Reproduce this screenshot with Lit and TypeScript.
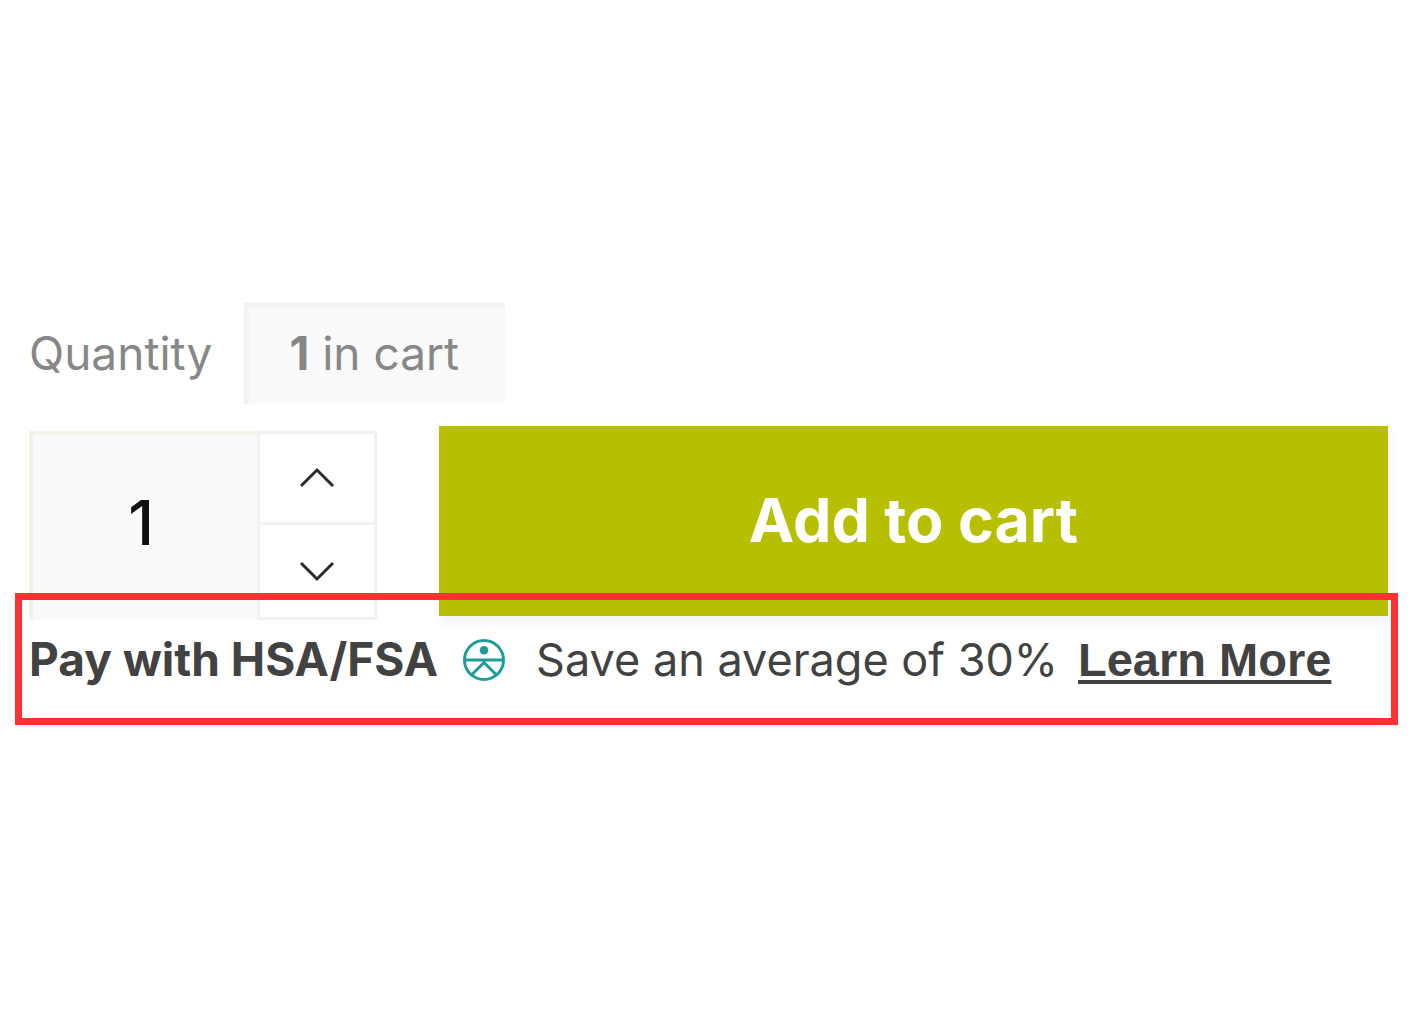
import { LitElement, html, css } from "lit";
import { customElement, state } from "lit/decorators.js";

@customElement("app-root")
export class AppRoot extends LitElement {
  static styles = css`
    :host {
      display: block;
      min-height: 100vh;
      box-sizing: border-box;
      padding: 303px 32px 32px 29px;
      background: #fff;
      color: #424242;
      font-family: Inter, "Liberation Sans", sans-serif;
      font-size: 46px;
      line-height: 56px;
    }
    .quantity-head {
      display: flex;
      align-items: baseline;
      gap: 32px;
      color: #878787;
    }
    .in-cart {
      padding: 22px 46px 23px 45px;
      background: #fafafa;
      box-shadow: inset 3px 3px 4px #efefef;
    }
    .purchase {
      display: flex;
      align-items: flex-start;
      gap: 62px;
      margin-top: 22px;
    }
    .stepper {
      display: grid;
      grid-template-columns: 228px 120px;
      height: 189px;
      margin-top: 5px;
    }
    .count {
      box-sizing: border-box;
      width: 100%;
      min-width: 0;
      height: 100%;
      margin: 0;
      padding: 0 8px 10px 0;
      border: 0 solid #f3f4e6;
      border-width: 4px 0 0 4px;
      border-radius: 0;
      outline: none;
      background: #fafafa;
      color: #121212;
      font: inherit;
      font-size: 62px;
      font-weight: 500;
      text-align: center;
    }
    .steps {
      display: grid;
      grid-template-rows: 88fr 92fr;
      gap: 3px;
      padding: 3px;
      background: #f2f2f2;
    }
    .step {
      display: flex;
      align-items: center;
      justify-content: center;
      padding: 0;
      border: 0;
      background: #fff;
      color: #2b2b2b;
      cursor: pointer;
    }
    .chevron {
      width: 36px;
      height: 22px;
    }
    .add {
      flex: 1;
      height: 190px;
      padding: 0 0 2px;
      border: 0;
      background: #b7c000;
      box-shadow: 0 6px 12px rgba(0, 0, 0, 0.06);
      color: #fff;
      font: inherit;
      font-size: 61px;
      font-weight: 700;
      cursor: pointer;
    }
    .benefit {
      position: relative;
      display: flex;
      align-items: baseline;
      margin-top: 11px;
      white-space: nowrap;
    }
    .pay {
      font-weight: 700;
    }
    .badge {
      flex: none;
      align-self: center;
      width: 44px;
      height: 44px;
      margin: 0 30px 0 24px;
    }
    .saving {
      font-size: 45px;
    }
    .learn {
      margin-left: 20px;
      color: inherit;
      font-family: "Liberation Sans", Arial, sans-serif;
      font-size: 47px;
      font-weight: 700;
      text-decoration: underline;
      text-decoration-thickness: 4px;
      text-underline-offset: 4px;
      text-decoration-skip-ink: none;
    }
    .highlight {
      position: absolute;
      inset: -38px -10px -37px -14px;
      border: 7px solid #ff3131;
      pointer-events: none;
    }
  `;

  @state() private count = 1;

  private change(delta: number) {
    this.count = Math.max(1, this.count + delta);
  }

  private typed(event: Event) {
    const value = parseInt((event.target as HTMLInputElement).value, 10);
    this.count = value > 0 ? value : 1;
  }

  render() {
    return html`
      <div class="quantity-head">
        <label for="count">Quantity</label>
        <span class="in-cart"><strong>1</strong> in cart</span>
      </div>
      <div class="purchase">
        <div class="stepper">
          <input
            class="count"
            id="count"
            type="text"
            inputmode="numeric"
            .value=${String(this.count)}
            @change=${this.typed}
          />
          <div class="steps">
            <button class="step" type="button" aria-label="Increase quantity" @click=${() => this.change(1)}>
              <svg class="chevron" viewBox="0 0 36 22" fill="none" stroke="currentColor" stroke-width="3" aria-hidden="true">
                <path d="M2 19 18 3l16 16" />
              </svg>
            </button>
            <button class="step" type="button" aria-label="Decrease quantity" @click=${() => this.change(-1)}>
              <svg class="chevron" viewBox="0 0 36 22" fill="none" stroke="currentColor" stroke-width="3" aria-hidden="true">
                <path d="M2 3l16 16L34 3" />
              </svg>
            </button>
          </div>
        </div>
        <button class="add" type="button">Add to cart</button>
      </div>
      <div class="benefit">
        <span class="pay">Pay with HSA/FSA</span>
        <svg class="badge" viewBox="0 0 44 44" fill="none" stroke="#1f9c98" stroke-width="3" aria-hidden="true">
          <circle cx="22" cy="22" r="19.5" />
          <path d="M2.5 22h39M10 36.5 22 24.5 34 36.5" />
          <circle cx="22" cy="12.3" r="4.3" fill="#1f9c98" stroke="none" />
        </svg>
        <span class="saving">Save an average of 30%</span>
        <a class="learn" href="#learn-more">Learn More</a>
        <span class="highlight"></span>
      </div>
    `;
  }
}
